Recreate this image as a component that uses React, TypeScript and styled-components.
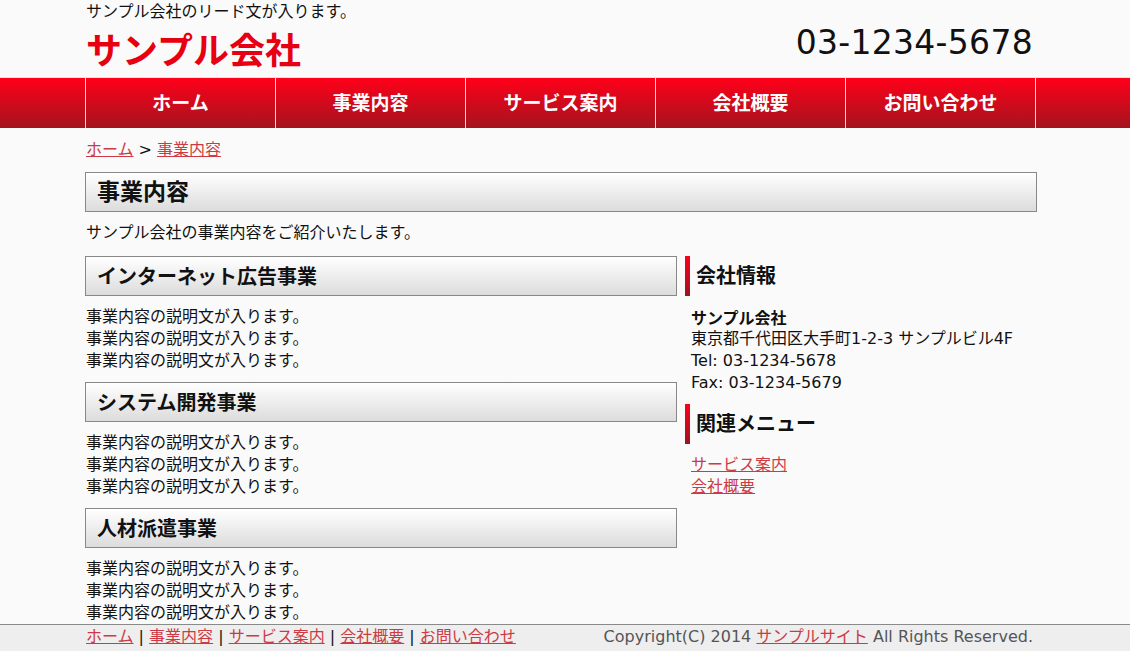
import React from 'react';
import styled, { createGlobalStyle } from 'styled-components';

const GlobalStyle = createGlobalStyle`
  html, body {
    margin: 0;
    padding: 0;
    background: #fafafa;
  }
  body {
    font-family: "DejaVu Sans", "Noto Sans CJK JP", sans-serif;
    font-size: 16px;
    line-height: 22px;
    color: #111;
  }
  * {
    box-sizing: border-box;
  }
`;

const LINK = '#cc3a44';

const Container = styled.div`
  width: 960px;
  margin: 0 auto;
`;

const Header = styled.header`
  display: flex;
  justify-content: space-between;
  align-items: flex-end;
  padding: 0 12px 4px 1px;
  height: 77px;
`;

const Brand = styled.div`
  display: flex;
  flex-direction: column;
`;

const Lead = styled.p`
  margin: 0;
  font-size: 16px;
  line-height: 22px;
`;

const Logo = styled.h1`
  margin: 0;
  font-size: 36px;
  line-height: 50px;
  font-weight: bold;
  color: #e60012;
  font-family: "Noto Sans CJK JP", sans-serif;
`;

const Phone = styled.div`
  font-family: "DejaVu Sans", sans-serif;
  font-size: 33px;
  line-height: 40px;
  margin-bottom: 10px;
  color: #111;
  letter-spacing: 0.3px;
`;

const NavBar = styled.nav`
  border-top: 1px solid #e4e4e4;
  height: 51px;
  background: linear-gradient(#ff0019, #a3141f);
`;

const NavList = styled.ul`
  display: flex;
  margin: 0;
  padding: 0;
  list-style: none;
  border-right: 1px solid rgba(255, 235, 235, 0.9);
  width: 951px;
  height: 50px;
`;

const NavItem = styled.li`
  width: 190px;
  height: 50px;
  display: flex;
  align-items: center;
  justify-content: center;
  padding-bottom: 3px;
  border-left: 1px solid rgba(255, 235, 235, 0.9);
  color: #fff;
  font-family: "Noto Sans CJK JP", sans-serif;
  font-weight: bold;
  font-size: 19px;
`;

const Link = styled.a`
  color: ${LINK};
  text-decoration: underline;
  cursor: pointer;
`;

const Breadcrumb = styled.div`
  padding: 11px 1px 0;
  height: 44px;
  line-height: 22px;
`;

const Sep = styled.span`
  margin: 0 5px;
  color: #111;
`;

const PageTitle = styled.h2`
  margin: 0;
  width: 952px;
  height: 40px;
  border: 1px solid #888;
  background: linear-gradient(#ffffff, #dcdcdc);
  font-family: "Noto Sans CJK JP", sans-serif;
  font-size: 23px;
  font-weight: bold;
  line-height: 35px;
  padding-left: 11px;
`;

const Intro = styled.p`
  margin: 10px 0 12px 1px;
  line-height: 22px;
`;

const Columns = styled.div`
  display: flex;
  gap: 8px;
`;

const Main = styled.main`
  width: 592px;
  display: flex;
  flex-direction: column;
  gap: 10px;
`;

const Side = styled.aside`
  width: 350px;
`;

const SectionTitle = styled.h3`
  margin: 0;
  height: 40px;
  border: 1px solid #888;
  background: linear-gradient(#ffffff, #dcdcdc);
  font-family: "Noto Sans CJK JP", sans-serif;
  font-size: 20px;
  font-weight: bold;
  line-height: 37px;
  padding-left: 11px;
`;

const SectionBody = styled.div`
  padding: 10px 1px 0;
`;

const Line = styled.div`
  line-height: 22px;
`;

const SideTitle = styled.h3`
  margin: 0;
  height: 40px;
  border-left: 5px solid #e00;
  border-image: linear-gradient(#ff0019, #9a1420) 1;
  font-family: "Noto Sans CJK JP", sans-serif;
  font-size: 20px;
  font-weight: bold;
  line-height: 38px;
  padding-left: 6px;
`;

const SideBody = styled.div`
  padding: 10px 6px;
`;

const Strong = styled.div`
  font-weight: bold;
  font-family: "Noto Sans CJK JP", sans-serif;
  line-height: 22px;
`;

const Footer = styled.footer`
  border-top: 1px solid #8a8a8a;
  background: #eeeeee;
  height: 27px;
`;

const FooterInner = styled(Container)`
  display: flex;
  justify-content: space-between;
  align-items: center;
  height: 26px;
  padding: 0 12px 2px 1px;
`;

const FooterLinks = styled.div`
  line-height: 22px;
`;

const Copy = styled.div`
  color: #555;
  line-height: 22px;
`;

const navItems = ['ホーム', '事業内容', 'サービス案内', '会社概要', 'お問い合わせ'];

const sections = ['インターネット広告事業', 'システム開発事業', '人材派遣事業'];

export default function App() {
  return (
    <>
      <GlobalStyle />
      <Container>
        <Header>
          <Brand>
            <Lead>サンプル会社のリード文が入ります。</Lead>
            <Logo>サンプル会社</Logo>
          </Brand>
          <Phone>03-1234-5678</Phone>
        </Header>
      </Container>
      <NavBar>
        <Container>
          <NavList>
            {navItems.map((item) => (
              <NavItem key={item}>{item}</NavItem>
            ))}
          </NavList>
        </Container>
      </NavBar>
      <Container>
        <Breadcrumb>
          <Link>ホーム</Link>
          <Sep>&gt;</Sep>
          <Link>事業内容</Link>
        </Breadcrumb>
        <PageTitle>事業内容</PageTitle>
        <Intro>サンプル会社の事業内容をご紹介いたします。</Intro>
        <Columns>
          <Main>
            {sections.map((title) => (
              <section key={title}>
                <SectionTitle>{title}</SectionTitle>
                <SectionBody>
                  <Line>事業内容の説明文が入ります。</Line>
                  <Line>事業内容の説明文が入ります。</Line>
                  <Line>事業内容の説明文が入ります。</Line>
                </SectionBody>
              </section>
            ))}
          </Main>
          <Side>
            <SideTitle>会社情報</SideTitle>
            <SideBody>
              <Strong>サンプル会社</Strong>
              <Line>東京都千代田区大手町1-2-3 サンプルビル4F</Line>
              <Line>Tel: 03-1234-5678</Line>
              <Line>Fax: 03-1234-5679</Line>
            </SideBody>
            <SideTitle>関連メニュー</SideTitle>
            <SideBody>
              <Line>
                <Link>サービス案内</Link>
              </Line>
              <Line>
                <Link>会社概要</Link>
              </Line>
            </SideBody>
          </Side>
        </Columns>
      </Container>
      <Footer>
        <FooterInner>
          <FooterLinks>
            <Link>ホーム</Link> | <Link>事業内容</Link> | <Link>サービス案内</Link> |{' '}
            <Link>会社概要</Link> | <Link>お問い合わせ</Link>
          </FooterLinks>
          <Copy>
            Copyright(C) 2014 <Link>サンプルサイト</Link> All Rights Reserved.
          </Copy>
        </FooterInner>
      </Footer>
    </>
  );
}
